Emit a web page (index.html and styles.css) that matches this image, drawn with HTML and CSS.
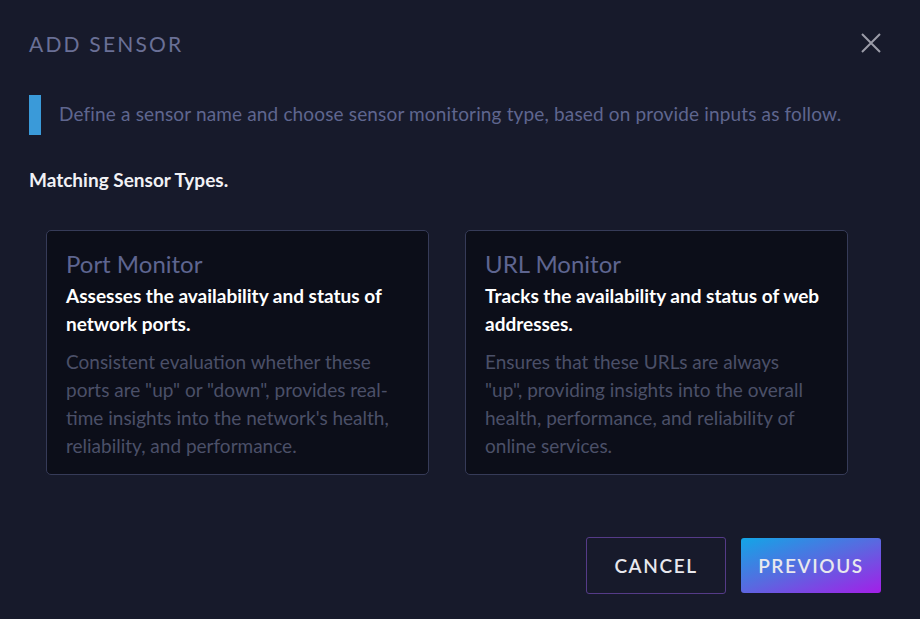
FILE: index.html
```html
<!DOCTYPE html>
<html>
<head>
<meta charset="utf-8">
<link rel="stylesheet" href="styles.css">
</head>
<body>
<div class="modal">
  <div class="header">
    <h1 class="title">ADD SENSOR</h1>
    <button class="close" aria-label="Close">
      <svg width="20" height="20" viewBox="0 0 20 20"><path d="M1 1L19 19M19 1L1 19" stroke="#9b9ca8" stroke-width="2" fill="none"/></svg>
    </button>
  </div>
  <div class="note">
    <span class="bar"></span>
    <p class="note-text">Define a sensor name and choose sensor monitoring type, based on provide inputs as follow.</p>
  </div>
  <h2 class="subtitle">Matching Sensor Types.</h2>
  <div class="cards">
    <div class="card">
      <div class="card-title">Port Monitor</div>
      <div class="card-lead">Assesses the availability and status of network ports.</div>
      <div class="card-desc">Consistent evaluation whether these ports are "up" or "down", provides real-time insights into the network's health, reliability, and performance.</div>
    </div>
    <div class="card">
      <div class="card-title">URL Monitor</div>
      <div class="card-lead">Tracks the availability and status of web addresses.</div>
      <div class="card-desc">Ensures that these URLs are always<br>"up", providing insights into the overall health, performance, and reliability of online services.</div>
    </div>
  </div>
  <div class="actions">
    <button class="btn btn-outline">CANCEL</button>
    <button class="btn btn-grad">PREVIOUS</button>
  </div>
</div>
</body>
</html>
```

FILE: styles.css
```css
html, body {
  margin: 0;
  padding: 0;
  background: #171a2b;
}
body {
  width: 920px;
  height: 619px;
  overflow: hidden;
  font-family: "Lato", "Open Sans", sans-serif;
}
.modal {
  padding: 28px 39px 0 29px;
  box-sizing: border-box;
}
.header {
  display: flex;
  justify-content: space-between;
  align-items: center;
  height: 30px;
}
.title {
  margin: 0;
  font-size: 21px;
  font-weight: 400;
  letter-spacing: 2.2px;
  color: #6a7096;
}
.close {
  background: none;
  border: 0;
  padding: 0;
  width: 20px;
  height: 20px;
  margin-right: 0;
  margin-top: 0;
}
.close svg { display: block; }
.note {
  display: flex;
  align-items: center;
  margin-top: 37px;
  height: 40px;
}
.bar {
  width: 12px;
  height: 40px;
  background: #3a9ad9;
  flex: none;
}
.note-text {
  margin: 0 0 0 18px;
  padding-bottom: 3px;
  font-size: 19px;
  letter-spacing: 0.15px;
  color: #5f668f;
  white-space: nowrap;
}
.subtitle {
  margin: 33px 0 0;
  font-size: 19px;
  font-weight: 700;
  color: #f1f1f5;
  line-height: 24px;
}
.cards {
  display: flex;
  gap: 36px;
  margin: 38px 0 0 17px;
}
.card {
  width: 383px;
  height: 245px;
  box-sizing: border-box;
  background: #0c0e19;
  border: 1px solid #363b58;
  border-radius: 5px;
  padding: 18px 14px 0 19px;
}
.card-title {
  font-size: 24px;
  color: #5e6590;
  line-height: 30px;
}
.card-lead {
  font-size: 19px;
  font-weight: 700;
  color: #ffffff;
  line-height: 28px;
  margin-top: 3px;
}
.card-desc {
  font-size: 19px;
  color: #4b5068;
  line-height: 28px;
  margin-top: 10px;
}
.actions {
  display: flex;
  justify-content: flex-end;
  gap: 15px;
  margin-top: 62px;
}
.btn {
  width: 140px;
  height: 57px;
  border-radius: 3px;
  font-family: "Lato", sans-serif;
  font-size: 19px;
  font-weight: 600;
  letter-spacing: 1.6px;
  color: #e8e8ee;
  cursor: pointer;
  padding: 0;
}
.btn-outline {
  background: transparent;
  border: 1.5px solid #553b88;
}
.btn-grad {
  border: 0;
  height: 55px;
  margin-top: 1px;
  background: linear-gradient(160deg, #12a6e6 0%, #5a68e0 50%, #a41ee8 100%);
}
```
